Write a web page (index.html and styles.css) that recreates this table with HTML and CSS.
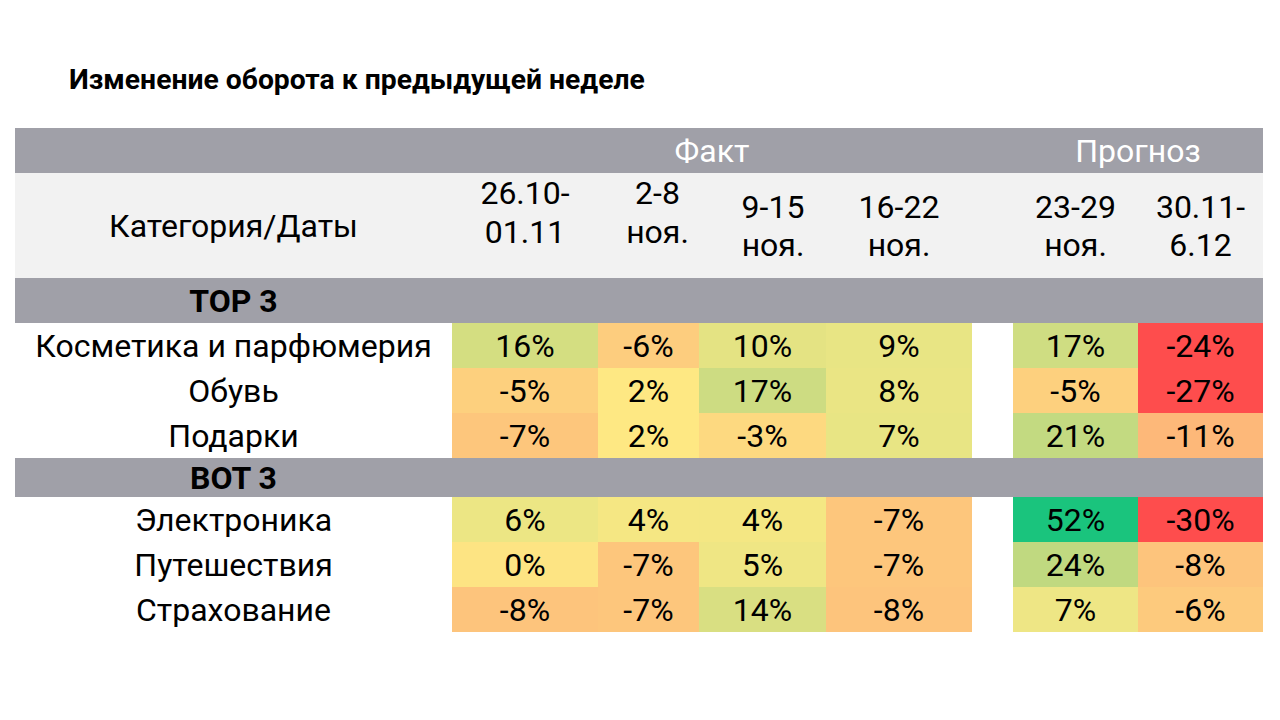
FILE: index.html
```html
<!DOCTYPE html>
<html lang="ru">
<head>
<meta charset="utf-8">
<title>Изменение оборота</title>
<link rel="stylesheet" href="styles.css">
</head>
<body>
<div class="page">
  <h1 class="title">Изменение оборота к предыдущей неделе</h1>
  <div class="table">
    <div class="row band">
      <div class="cell"></div>
      <div class="cell span4 band-label">Факт</div>
      <div class="cell"></div>
      <div class="cell span2 band-label">Прогноз</div>
    </div>
    <div class="row head">
      <div class="cell cat">Категория/Даты</div>
      <div class="cell h h-top">26.10-<br>01.11</div>
      <div class="cell h h-top h-shift2">2-8<br>ноя.</div>
      <div class="cell h h-shift3">9-15<br>ноя.</div>
      <div class="cell h">16-22<br>ноя.</div>
      <div class="cell"></div>
      <div class="cell h">23-29<br>ноя.</div>
      <div class="cell h">30.11-<br>6.12</div>
    </div>
    <div class="row section"><div class="cell cat">TOP 3</div></div>
    <div class="row data">
      <div class="cell cat">Косметика и парфюмерия</div>
      <div class="cell v" style="background:#d4de81">16%</div>
      <div class="cell v" style="background:#fdcd7e">-6%</div>
      <div class="cell v" style="background:#e4e383">10%</div>
      <div class="cell v" style="background:#e8e584">9%</div>
      <div class="cell"></div>
      <div class="cell v" style="background:#cfdd82">17%</div>
      <div class="cell v" style="background:#fe4d4d">-24%</div>
    </div>
    <div class="row data">
      <div class="cell cat">Обувь</div>
      <div class="cell v" style="background:#fdd07e">-5%</div>
      <div class="cell v" style="background:#fee883">2%</div>
      <div class="cell v" style="background:#cddc82">17%</div>
      <div class="cell v" style="background:#eae584">8%</div>
      <div class="cell"></div>
      <div class="cell v" style="background:#fdd07e">-5%</div>
      <div class="cell v" style="background:#fe4d4d">-27%</div>
    </div>
    <div class="row data">
      <div class="cell cat">Подарки</div>
      <div class="cell v" style="background:#fdc67c">-7%</div>
      <div class="cell v" style="background:#fee883">2%</div>
      <div class="cell v" style="background:#fdd980">-3%</div>
      <div class="cell v" style="background:#e8e584">7%</div>
      <div class="cell"></div>
      <div class="cell v" style="background:#c3da81">21%</div>
      <div class="cell v" style="background:#fdb879">-11%</div>
    </div>
    <div class="row section short"><div class="cell cat">BOT 3</div></div>
    <div class="row data">
      <div class="cell cat">Электроника</div>
      <div class="cell v" style="background:#ece684">6%</div>
      <div class="cell v" style="background:#f5e783">4%</div>
      <div class="cell v" style="background:#f4e783">4%</div>
      <div class="cell v" style="background:#fdc67c">-7%</div>
      <div class="cell"></div>
      <div class="cell v" style="background:#1ac47d">52%</div>
      <div class="cell v" style="background:#fe4d4d">-30%</div>
    </div>
    <div class="row data">
      <div class="cell cat">Путешествия</div>
      <div class="cell v" style="background:#fde483">0%</div>
      <div class="cell v" style="background:#fdc67c">-7%</div>
      <div class="cell v" style="background:#efe684">5%</div>
      <div class="cell v" style="background:#fdc67c">-7%</div>
      <div class="cell"></div>
      <div class="cell v" style="background:#c0d980">24%</div>
      <div class="cell v" style="background:#fdc47c">-8%</div>
    </div>
    <div class="row data">
      <div class="cell cat">Страхование</div>
      <div class="cell v" style="background:#fdc47c">-8%</div>
      <div class="cell v" style="background:#fdc67c">-7%</div>
      <div class="cell v" style="background:#d9df82">14%</div>
      <div class="cell v" style="background:#fdc47c">-8%</div>
      <div class="cell"></div>
      <div class="cell v" style="background:#eee685">7%</div>
      <div class="cell v" style="background:#fdca7d">-6%</div>
    </div>
  </div>
</div>
</body>
</html>
```
FILE: styles.css
```css
* { box-sizing: border-box; }
html, body { margin: 0; padding: 0; background: #ffffff; }
body {
  font-family: Roboto, "Liberation Sans", sans-serif;
  color: #000;
  width: 1280px;
  height: 720px;
  overflow: hidden;
}
.page {
  padding: 63px 0 0 15px;
}
.title {
  margin: 0 0 0 54px;
  font-size: 28.3px;
  font-weight: 700;
  line-height: 34px;
  height: 65px;
}
.table {
  width: 1248px;
}
.row {
  display: grid;
  grid-template-columns: 437px 146px 101px 127px 146px 41px 125px 125px;
  height: 45px;
}
.cell {
  display: flex;
  align-items: center;
  justify-content: center;
  text-align: center;
  font-size: 32px;
  line-height: 1;
  white-space: nowrap;
}
.band { background: #a0a0a8; }
.band-label { color: #ffffff; }
.span4 { grid-column: span 4; }
.span2 { grid-column: span 2; }
.head {
  background: #f2f2f2;
  height: 105px;
}
.h { line-height: 38px; }
.h-top { align-items: flex-start; padding-top: 1px; line-height: 39px; }
.h-shift2 { padding-left: 18px; }
.h-shift3 { padding-left: 21px; }
.section {
  background: #a0a0a8;
}
.section .cat { font-weight: 700; }
.section.short { height: 39px; }
```
